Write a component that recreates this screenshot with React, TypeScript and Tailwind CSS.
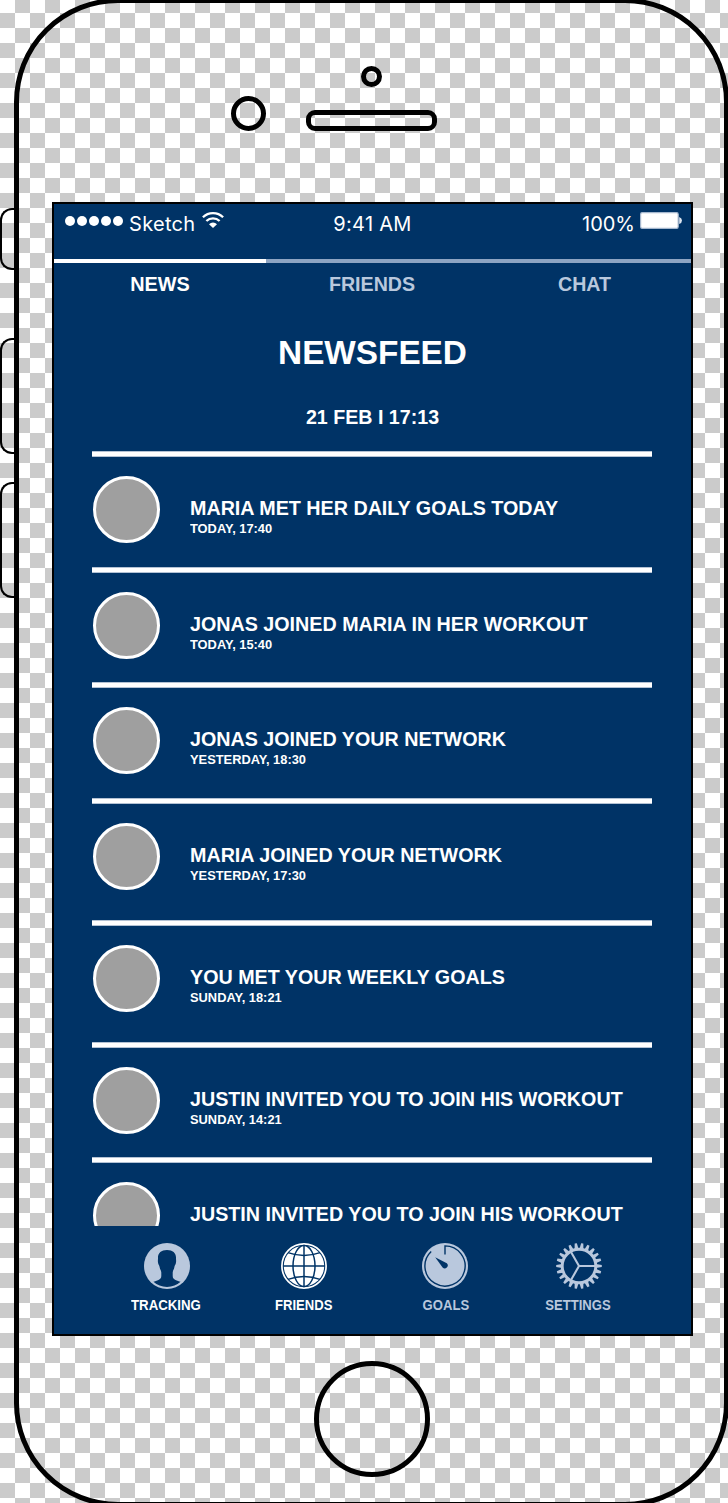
import React from "react";

const PALE = "#b9c8dd";
const NAVY = "#003366";

const feed = [
  { title: "MARIA MET HER DAILY GOALS TODAY", time: "TODAY, 17:40", box: "h-[116px]" },
  { title: "JONAS JOINED MARIA IN HER WORKOUT", time: "TODAY, 15:40", box: "h-[115px]" },
  { title: "JONAS JOINED YOUR NETWORK", time: "YESTERDAY, 18:30", box: "h-[116px]" },
  { title: "MARIA JOINED YOUR NETWORK", time: "YESTERDAY, 17:30", box: "h-[122px]" },
  { title: "YOU MET YOUR WEEKLY GOALS", time: "SUNDAY, 18:21", box: "h-[122px]" },
  { title: "JUSTIN INVITED YOU TO JOIN HIS WORKOUT", time: "SUNDAY, 14:21", box: "h-[115px]" },
  { title: "JUSTIN INVITED YOU TO JOIN HIS WORKOUT", time: "", box: "h-[115px]" },
];

function ProfileIcon() {
  return (
    <svg width="46" height="46" viewBox="0 0 46 46">
      <circle cx="23" cy="23" r="23" fill={PALE} />
      <path
        d="M23 7C17 7 13.6 10.3 14 15.5C14 17 13.6 18 14.2 20.5C14.6 22 15.4 22.3 15.7 24.5C16 26.5 17.2 27.5 17.3 29.5V33C17.3 37.2 12.5 37.6 9.4 38.8Q15 43.9 23 43.9Q31 43.9 36.6 38.8C33.5 37.6 28.7 37.2 28.7 33V29.5C28.8 27.5 30 26.5 30.3 24.5C30.6 22.3 31.4 22 31.8 20.5C32.4 18 32 17 32 15.5C32.4 10.3 29 7 23 7Z"
        fill={NAVY}
      />
    </svg>
  );
}

function GlobeIcon() {
  return (
    <svg width="46" height="46" viewBox="0 0 46 46" fill="none" stroke={NAVY} strokeWidth="1.5">
      <circle cx="23" cy="23" r="22.1" stroke="#fff" strokeWidth="1.7" />
      <circle cx="23" cy="23" r="20.2" fill="#fff" stroke="none" />
      <path d="M2 23H44M23 2V44" />
      <ellipse cx="23" cy="23" rx="11" ry="20.5" />
      <path d="M7 9.6Q23 15.4 39 9.6M7 36.4Q23 30.6 39 36.4" />
    </svg>
  );
}

function TimerIcon() {
  return (
    <svg width="46" height="46" viewBox="0 0 46 46" fill="none">
      <circle cx="23" cy="23" r="23" fill={PALE} />
      <path d="M23 11.5V2.9A20.1 20.1 0 1 1 9.2 8.4" stroke={NAVY} strokeWidth="1.4" />
      <path d="M13.2 14.2L24.8 20.2A2.9 2.9 0 1 1 20.6 24.4Z" fill={NAVY} />
    </svg>
  );
}

function GearIcon() {
  return (
    <svg width="46" height="46" viewBox="0 0 46 46" fill="none">
      {Array.from({ length: 22 }, (_, i) => (
        <path key={i} d="M40 21L45.8 21.9V24.1L40 25Z" fill={PALE} transform={`rotate(${(i * 360) / 22} 23 23)`} />
      ))}
      <circle cx="23" cy="23" r="16.8" stroke={PALE} strokeWidth="2.9" />
      <path d="M23 23H39M23 23L15 9.1M23 23L15 36.9" stroke={PALE} strokeWidth="2.1" />
    </svg>
  );
}

function WifiIcon() {
  return (
    <svg width="22" height="16" viewBox="0 0 22 16" fill="none" stroke="#fff">
      <path d="M0.9 5.3A14.4 14.4 0 0 1 21.1 5.3" strokeWidth="2.3" />
      <path d="M4.4 9A9.4 9.4 0 0 1 17.6 9" strokeWidth="2.3" />
      <path d="M11 16L7 12.2A5.4 5.4 0 0 1 15 12.2Z" fill="#fff" stroke="none" />
    </svg>
  );
}

function BatteryIcon() {
  return (
    <svg width="42" height="17" viewBox="0 0 42 17">
      <rect x="0.6" y="0.6" width="37.6" height="15.8" rx="1.6" fill="#fff" stroke="#a5b7ce" strokeWidth="1.2" />
      <path d="M39.2 5Q42 6 42 8.5Q42 11 39.2 12Z" fill="#dde5ef" />
    </svg>
  );
}

export default function App() {
  return (
    <div className="flex h-[1503px] w-[728px] overflow-hidden bg-[repeating-conic-gradient(#ffffff_0_25%,#cbcbcb_0_50%)] bg-[length:30px_30px] bg-[position:0_13px] font-['Liberation_Sans',sans-serif] font-bold text-white">
      <div className="flex w-[14px] shrink-0 flex-col pt-[208px]">
        <div className="h-[62px] rounded-l-[12px] border-[2px] border-r-0 border-black" />
        <div className="mt-[68px] h-[116px] rounded-l-[12px] border-[2px] border-r-0 border-black" />
        <div className="mt-[28px] h-[116px] rounded-l-[12px] border-[2px] border-r-0 border-black" />
      </div>

      <div className="-mt-[2px] flex h-[1509px] w-[715px] shrink-0 flex-col items-center rounded-[104px] border-[5px] border-black">
        <div className="flex h-[199px] w-full shrink-0 flex-col items-center pt-[63px]">
          <div className="h-[21px] w-[21px] shrink-0 rounded-full border-[5px] border-black" />
          <div className="mt-[9px] flex w-full items-center pl-[212px]">
            <div className="h-[35px] w-[35px] rounded-full border-[5px] border-black" />
            <div className="mt-[14px] ml-[40px] h-[21px] w-[131px] rounded-[9px] border-[5px] border-black" />
          </div>
        </div>

        <div className="ml-[2px] flex h-[1134px] w-[641px] shrink-0 flex-col border-[2px] border-black bg-[#003366]">
          <div className="flex h-[55px] shrink-0 items-start pt-[8px] font-['Inter',sans-serif] text-[20px] leading-[24px] font-normal">
            <div className="flex flex-1 items-start pl-[11px]">
              <div className="mt-[4px] flex gap-[2px]">
                {[0, 1, 2, 3, 4].map((i) => (
                  <div key={i} className="h-[10px] w-[10px] rounded-full bg-white" />
                ))}
              </div>
              <span className="ml-[6px] tracking-[0.3px]">Sketch</span>
              <div className="ml-[7px]">
                <WifiIcon />
              </div>
            </div>
            <span className="-ml-[2px] tracking-[0.3px]">9:41 AM</span>
            <div className="flex flex-1 items-start justify-end pr-[9px]">
              <span className="mr-[5px]">100%</span>
              <BatteryIcon />
            </div>
          </div>

          <div className="flex shrink-0 text-center text-[21px] leading-[24px]">
            <div className="w-[212px] border-t-[4px] border-white pt-[9px]">
              <div className="scale-x-[0.945]">NEWS</div>
            </div>
            <div className="w-[212px] border-t-[4px] border-[#8da4c2] pt-[9px] text-[#b9c8dd]">
              <div className="scale-x-[0.935]">FRIENDS</div>
            </div>
            <div className="w-[213px] border-t-[4px] border-[#8da4c2] pt-[9px] text-[#b9c8dd]">
              <div className="scale-x-[0.935]">CHAT</div>
            </div>
          </div>

          <h1 className="mt-[36px] shrink-0 scale-x-[0.98] text-center text-[34px] leading-[40px]">NEWSFEED</h1>
          <div className="mt-[33px] shrink-0 scale-x-[0.935] text-center text-[21px] leading-[24px]">21 FEB I 17:13</div>

          <div className="mt-[22px] flex h-[775px] shrink-0 flex-col overflow-hidden pr-[39px] pl-[38px]">
            {feed.map((item, i) => (
              <div key={i} className={"flex shrink-0 flex-col " + item.box}>
                <div className="h-[6px] shrink-0 border-y border-[#b3c2d4] bg-white" />
                <div className="flex items-start pl-px">
                  <div className="mt-[19px] h-[67px] w-[67px] shrink-0 rounded-full border-[3px] border-white bg-[#9f9f9f]" />
                  <div className="ml-[30px] pt-[39px] whitespace-nowrap">
                    <div className="origin-left scale-x-[0.938] text-[21px] leading-[24px]">{item.title}</div>
                    {item.time && (
                      <div className="origin-left scale-x-[0.952] text-[13.5px] leading-[18px]">{item.time}</div>
                    )}
                  </div>
                </div>
              </div>
            ))}
          </div>

          <div className="flex shrink-0 pt-[17px] pl-[44px] text-[14px] leading-[16px]">
            <div className="flex w-[138px] flex-col items-center gap-[8px]">
              <ProfileIcon />
              <span className="-ml-[2px] scale-x-[0.945]">TRACKING</span>
            </div>
            <div className="flex w-[136px] flex-col items-center gap-[8px]">
              <GlobeIcon />
              <span className="scale-x-[0.935]">FRIENDS</span>
            </div>
            <div className="flex w-[145px] flex-col items-center gap-[8px] text-[#b9c8dd]">
              <TimerIcon />
              <span className="ml-[2px] scale-x-[0.935]">GOALS</span>
            </div>
            <div className="flex w-[123px] flex-col items-center gap-[8px] text-[#b9c8dd]">
              <GearIcon />
              <span className="scale-x-[0.935]">SETTINGS</span>
            </div>
          </div>
        </div>

        <div className="mt-[25px] h-[116px] w-[116px] shrink-0 rounded-full border-[5px] border-black" />
      </div>
    </div>
  );
}
